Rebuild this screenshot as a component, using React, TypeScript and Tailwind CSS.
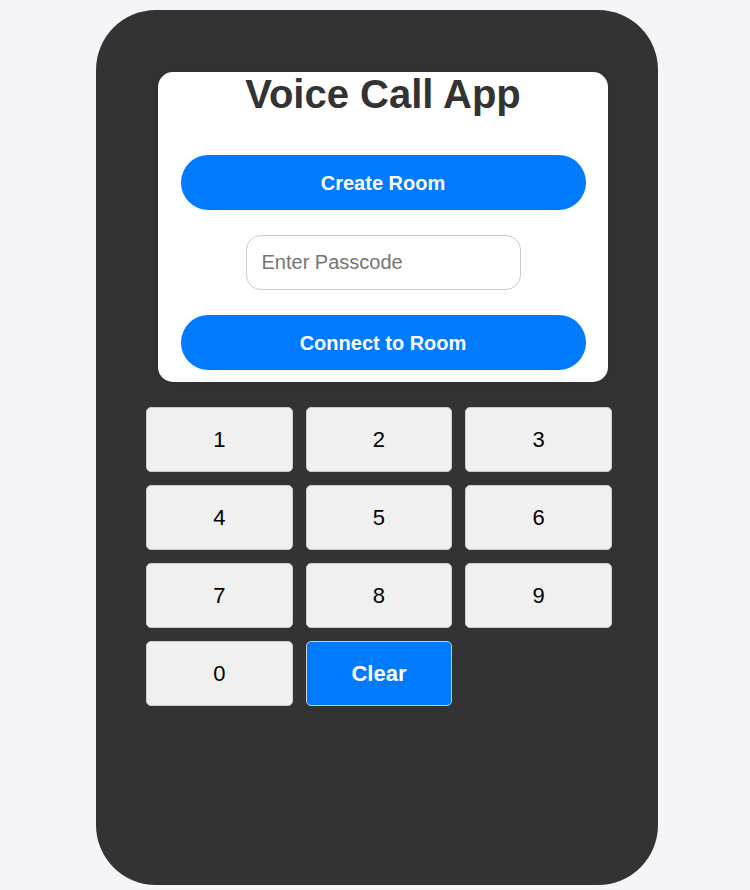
import React, { useState } from 'react';

const keys = ['1', '2', '3', '4', '5', '6', '7', '8', '9', '0'];

export default function App() {
  const [passcode, setPasscode] = useState('');

  return (
    <div className="min-h-[890px] w-[750px] bg-[#f4f4f9] pl-[96px] pt-[10px] font-['Liberation_Sans',Arial,sans-serif]">
      <div className="h-[875px] w-[562px] rounded-[60px] bg-[#333333] pl-[50px] pt-[62px]">
        <div className="ml-[12px] flex h-[310px] w-[450px] flex-col items-center rounded-[15px] bg-white shadow-[0_0_10px_rgba(0,0,0,0.1)]">
          <h1 className="text-[40px] font-bold leading-[44px] text-[#333333]">Voice Call App</h1>
          <button className="mt-[39px] h-[55px] w-[405px] rounded-full bg-[#007bff] text-[20px] font-bold text-white">
            Create Room
          </button>
          <input
            value={passcode}
            onChange={(e) => setPasscode(e.target.value)}
            placeholder="Enter Passcode"
            className="mt-[25px] h-[55px] w-[275px] rounded-[15px] border border-[#cccccc] px-[15px] text-[20px] text-[#333333] outline-none placeholder:text-[#757575]"
          />
          <button className="mt-[25px] h-[55px] w-[405px] rounded-full bg-[#007bff] text-[20px] font-bold text-white">
            Connect to Room
          </button>
        </div>

        <div className="mt-[25px] grid w-[466px] grid-cols-3 gap-[13px]">
          {keys.map((k) => (
            <button
              key={k}
              onClick={() => setPasscode((p) => p + k)}
              className="h-[65px] rounded-[5px] border border-[#cccccc] bg-[#f0f0f0] text-[22px] text-black"
            >
              {k}
            </button>
          ))}
          <button
            onClick={() => setPasscode('')}
            className="h-[65px] rounded-[5px] border border-[#cccccc] bg-[#007bff] text-[22px] font-bold text-white"
          >
            Clear
          </button>
        </div>
      </div>
    </div>
  );
}
